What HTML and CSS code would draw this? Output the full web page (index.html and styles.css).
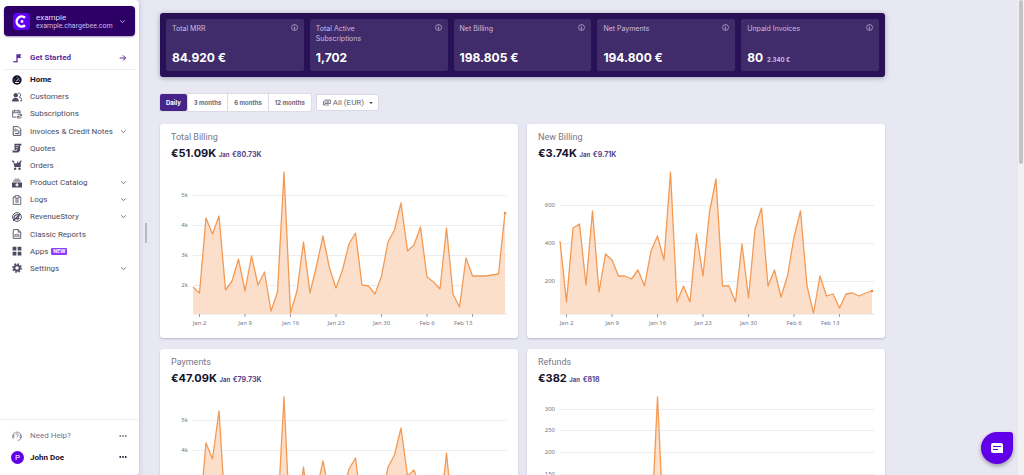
FILE: index.html
```html
<!DOCTYPE html>
<html lang="en">
<head>
<meta charset="utf-8">
<title>Home</title>
<link rel="stylesheet" href="styles.css">
</head>
<body>
<div class="app">
  <aside class="sidebar">
    <button class="account" type="button">
      <svg class="logo" viewBox="0 0 34 34"><rect width="34" height="34" rx="8" fill="#6200f5"/><path d="M24 9.500A10 10 0 1 0 24 24.500" fill="none" stroke="#fff" stroke-width="5"/><circle cx="18" cy="17" r="2.800" fill="#fff"/></svg>
      <span class="account-text"><span class="account-name">example</span><span class="account-domain">example.chargebee.com</span></span>
      <svg class="chevron" viewBox="0 0 12 12"><path d="M2 4l4 4 4-4"/></svg>
    </button>
    <a class="item get-started" href="#">
      <svg class="icon" viewBox="0 0 16 16"><path d="M7 2h8l-2 3 2 3H9v6H7z" fill="currentColor"/><path d="M2 13h7v2H2z" fill="currentColor"/></svg>
      <span class="label">Get Started</span>
      <svg class="arrow" viewBox="0 0 12 12"><path d="M1 6h9M6 2l4 4-4 4"/></svg>
    </a>
    <nav class="nav">
      <a class="item active" href="#"><svg class="icon" viewBox="0 0 16 16"><circle cx="8" cy="8" r="7.500" fill="currentColor"/><path d="M7 10l4.500-5M3 8h1M8 3v1M12 9h1M5 12h6" stroke="#fff" stroke-width="1.500" fill="none"/></svg><span class="label">Home</span></a>
      <a class="item" href="#"><svg class="icon" viewBox="0 0 16 16"><circle cx="6" cy="5" r="3.500" fill="currentColor"/><path d="M0 15c0-8 11-8 11 0z" fill="currentColor"/><path d="M10 2c5-1 5 6 1 6M12 9c3 0 4 2 4 5h-3" fill="none" stroke="currentColor" stroke-width="1.500"/></svg><span class="label">Customers</span></a>
      <a class="item" href="#"><svg class="icon" viewBox="0 0 16 16"><path d="M7 13H1V3h12v4M1 6h12M4 1v3M10 1v3M9 10a3.200 3.200 0 0 1 6 1M15 13a3.200 3.200 0 0 1-6-1M15 8v3h-3M9 15v-3h3" fill="none" stroke="currentColor" stroke-width="1.300"/></svg><span class="label">Subscriptions</span></a>
      <a class="item" href="#"><svg class="icon" viewBox="0 0 16 16"><path d="M2 1h8l4 4v10H2zM5 4v5M5 12h6M8 5v4M11 7v5" fill="none" stroke="currentColor" stroke-width="1.500"/></svg><span class="label">Invoices &amp; Credit Notes</span><svg class="chevron" viewBox="0 0 12 12"><path d="M2 4l4 4 4-4"/></svg></a>
      <a class="item" href="#"><svg class="icon" viewBox="0 0 16 16"><path d="M4 1h11v3h-2v8l-3 3H1v-4h3z" fill="currentColor"/><path d="M6 4h5M6 7h4M6 10h3M2 12h6" stroke="#fff" fill="none"/></svg><span class="label">Quotes</span></a>
      <a class="item" href="#"><svg class="icon" viewBox="0 0 16 16"><path d="M0 1h3l1 4 3 1 2-4 2 3 2-4h3l-2 3v7H4L2 3H0z" fill="currentColor"/><circle cx="5" cy="14" r="2" fill="currentColor"/><circle cx="12" cy="14" r="2" fill="currentColor"/></svg><span class="label">Orders</span></a>
      <a class="item" href="#"><svg class="icon" viewBox="0 0 16 16"><path d="M4 1h8v1.500H4zM2 4h12v1.500H2zM0 7h16v8H0z" fill="currentColor"/><path d="M8 8.500v5M5.500 11h5" stroke="#fff" stroke-width="2"/></svg><span class="label">Product Catalog</span><svg class="chevron" viewBox="0 0 12 12"><path d="M2 4l4 4 4-4"/></svg></a>
      <a class="item" href="#"><svg class="icon" viewBox="0 0 16 16"><path d="M5 3H2v12h12V3h-3M5 1h6v4H5zM5 8h2M9 8h2M5 11h2M9 11h2M8 5v8" fill="none" stroke="currentColor" stroke-width="1.300"/></svg><span class="label">Logs</span><svg class="chevron" viewBox="0 0 12 12"><path d="M2 4l4 4 4-4"/></svg></a>
      <a class="item" href="#"><svg class="icon" viewBox="0 0 16 16"><circle cx="8" cy="8" r="7" fill="none" stroke="currentColor" stroke-width="1.500"/><path d="M3 11c0-6 3-7 9-7-1 5-2 7-6 7M2 14L11 5M8 12l4-2" fill="none" stroke="currentColor" stroke-width="1.700"/></svg><span class="label">RevenueStory</span><svg class="chevron" viewBox="0 0 12 12"><path d="M2 4l4 4 4-4"/></svg></a>
      <a class="item" href="#"><svg class="icon" viewBox="0 0 16 16"><path d="M2 1h8l4 4v10H2zM10 1v4h4M5 8v5M8 7v6M11 8v5" fill="none" stroke="currentColor" stroke-width="1.400"/></svg><span class="label">Classic Reports</span></a>
      <a class="item" href="#"><svg class="icon" viewBox="0 0 16 16"><path d="M1 1h6v6H1zM9 1h6v6H9zM1 9h6v6H1zM9 9h6v6H9z" fill="currentColor"/></svg><span class="label">Apps <span class="badge">NEW</span></span></a>
      <a class="item" href="#"><svg class="icon" viewBox="0 0 16 16"><circle cx="8" cy="8" r="4.300" fill="none" stroke="currentColor" stroke-width="3"/><circle cx="8" cy="8" r="6.500" fill="none" stroke="currentColor" stroke-width="2.600" stroke-dasharray="2.700 2.400"/></svg><span class="label">Settings</span><svg class="chevron" viewBox="0 0 12 12"><path d="M2 4l4 4 4-4"/></svg></a>
    </nav>
    <div class="sidebar-foot">
      <a class="item help" href="#"><svg class="icon" viewBox="0 0 16 16"><path d="M3 11H1V7h2zM13 7h2v4h-2zM2 7C2 0 14 0 14 7M14 11c0 3-2 4-5 4M6 6c0-2 4-2 4 0s-2 1-2 4" fill="none" stroke="currentColor" stroke-width="1.300"/></svg><span class="label">Need Help?</span><svg class="dots" viewBox="0 0 16 4"><circle cx="2.500" cy="2" r="1.800"/><circle cx="8" cy="2" r="1.800"/><circle cx="13.500" cy="2" r="1.800"/></svg></a>
      <a class="item user" href="#"><span class="avatar">P</span><span class="label">John Doe</span><svg class="dots" viewBox="0 0 16 4"><circle cx="2.500" cy="2" r="1.800"/><circle cx="8" cy="2" r="1.800"/><circle cx="13.500" cy="2" r="1.800"/></svg></a>
    </div>
  </aside>
  <div class="resizer"></div>
  <main class="main">
    <section class="kpis">
      <div class="kpi"><div class="kpi-top"><span>Total MRR</span><svg class="info" viewBox="0 0 14 14"><circle cx="7" cy="7" r="6"/><path d="M5.500 6H7v4M5 10h4M7 3v1.500"/></svg></div><div class="kpi-value">84.920 €</div></div>
      <div class="kpi"><div class="kpi-top"><span>Total Active Subscriptions</span><svg class="info" viewBox="0 0 14 14"><circle cx="7" cy="7" r="6"/><path d="M5.500 6H7v4M5 10h4M7 3v1.500"/></svg></div><div class="kpi-value">1,702</div></div>
      <div class="kpi"><div class="kpi-top"><span>Net Billing</span><svg class="info" viewBox="0 0 14 14"><circle cx="7" cy="7" r="6"/><path d="M5.500 6H7v4M5 10h4M7 3v1.500"/></svg></div><div class="kpi-value">198.805 €</div></div>
      <div class="kpi"><div class="kpi-top"><span>Net Payments</span><svg class="info" viewBox="0 0 14 14"><circle cx="7" cy="7" r="6"/><path d="M5.500 6H7v4M5 10h4M7 3v1.500"/></svg></div><div class="kpi-value">194.800 €</div></div>
      <div class="kpi"><div class="kpi-top"><span>Unpaid Invoices</span><svg class="info" viewBox="0 0 14 14"><circle cx="7" cy="7" r="6"/><path d="M5.500 6H7v4M5 10h4M7 3v1.500"/></svg></div><div class="kpi-value">80 <small>2.340 €</small></div></div>
    </section>
    <div class="filters">
      <div class="segments">
        <button class="segment selected" type="button">Daily</button>
        <button class="segment" type="button">3 months</button>
        <button class="segment" type="button">6 months</button>
        <button class="segment" type="button">12 months</button>
      </div>
      <div class="currency">
        <svg class="money" viewBox="0 0 16 12"><path d="M4 1h11v7H4zM1 3v8h11M1 11l3-3" fill="none" stroke="currentColor" stroke-width="1.300"/><circle cx="9.500" cy="4.500" r="1.900" fill="none" stroke="currentColor" stroke-width="1.300"/></svg>
        <select aria-label="Currency"><option>All (EUR)</option></select>
        <svg class="caret" viewBox="0 0 8 4"><path d="M0 0h8L4 4z" fill="currentColor"/></svg>
      </div>
    </div>
    <section class="charts">
      <article class="card"><h2>Total Billing</h2><p class="amount">€51.09K <small>Jan</small> <b>€80.73K</b></p><svg class="chart" data-chart="billing" viewBox="0 40 358 174"></svg></article>
      <article class="card"><h2>New Billing</h2><p class="amount">€3.74K <small>Jan</small> <b>€9.71K</b></p><svg class="chart" data-chart="newBilling" viewBox="0 40 358 174"></svg></article>
      <article class="card"><h2>Payments</h2><p class="amount">€47.09K <small>Jan</small> <b>€79.73K</b></p><svg class="chart" data-chart="payments" viewBox="0 40 358 174"></svg></article>
      <article class="card"><h2>Refunds</h2><p class="amount">€382 <small>Jan</small> <b>€818</b></p><svg class="chart" data-chart="refunds" viewBox="0 40 358 174"></svg></article>
    </section>
  </main>
  <div class="rail"><div class="rail-thumb"></div></div>
  <button class="chat" type="button" aria-label="Chat"><svg viewBox="0 0 14 12"><path d="M3 1h8a2 2 0 0 1 2 2v8H3a2 2 0 0 1-2-2V3a2 2 0 0 1 2-2z" fill="#fff"/><path d="M3 4.500h8M3 7.500h5" stroke="#6000e8" stroke-width="1.200"/></svg></button>
</div>
<script src="charts.js"></script>
</body>
</html>
```
FILE: styles.css
```css
* { box-sizing: border-box; }
body { margin: 0; font-family: Roboto, "Liberation Sans", sans-serif; font-size: 8px; color: #4b4a60; background: #e8e8f3; }
button, select { font: inherit; color: inherit; }
a { color: inherit; text-decoration: none; }
.app { display: flex; height: 100vh; overflow: hidden; position: relative; }

.sidebar { width: 139px; flex: none; display: flex; flex-direction: column; background: #fff; border-radius: 0 4px 4px 0; box-shadow: 0 0 5px rgba(60, 50, 110, .25); padding: 6px 4px 0; }
.account { display: flex; align-items: center; gap: 6px; height: 30px; border: 0; border-radius: 4px; background: #2c0066; color: #e6dcf7; padding: 0 12px 0 9px; text-align: left; box-shadow: 0 1px 2px rgba(40, 0, 90, .4); }
.logo { width: 17px; height: 17px; flex: none; }
.account-text { flex: 1; display: flex; flex-direction: column; }
.account-name { font-size: 8px; line-height: 9px; }
.account-domain { font-size: 7px; line-height: 8px; color: #cdbde8; }
.item { display: flex; align-items: center; padding: 0 8px; }
.icon { width: 10px; height: 10px; flex: none; margin-right: 8px; }
.label { flex: 1; white-space: nowrap; }
.chevron, .arrow { width: 7px; height: 7px; flex: none; fill: none; stroke: currentColor; stroke-width: 1.3; }
.arrow { width: 8px; height: 8px; stroke-width: 1.5; }
.get-started { height: 34px; padding-top: 10px; color: #5a2ca0; font-weight: bold; border-bottom: 1px solid #ececf2; }
.nav { display: grid; grid-auto-rows: 1fr; min-height: 207px; padding-top: 1px; }
.active { color: #14122b; font-weight: bold; }
.badge { display: inline-block; background: #8b3dff; color: #fff; font: bold 5px/7px Inter, sans-serif; padding: 0 2px; border-radius: 1px; vertical-align: 1px; margin-left: 1px; }
.sidebar-foot { margin: auto -4px 0; padding: 5px 4px 7px; border-top: 1px solid #ececf2; }
.help { height: 21px; color: #77768a; }
.user { height: 22px; color: #14122b; font-weight: bold; }
.sidebar-foot .user { padding-left: 7px; }
.avatar { width: 13px; height: 13px; border-radius: 50%; background: #6000e8; color: #fff; font-weight: normal; line-height: 13px; text-align: center; margin-right: 6px; }
.dots { width: 8px; height: 2px; fill: currentColor; }
.resizer { width: 2px; height: 20px; margin: 223px 0 0 6px; background: #b9b9c2; flex: none; }

.main { flex: 1; min-width: 0; overflow-y: auto; scrollbar-width: none; padding: 13px 13px 10px; }
.kpis { display: grid; grid-template-columns: repeat(5, 1fr); gap: 6px; max-width: 725px; padding: 6px; border-radius: 3px; background: #291158; box-shadow: 0 1px 5px rgba(30, 20, 70, .35); }
.kpi { display: flex; flex-direction: column; min-height: 52px; padding: 5px 6px 6px; border-radius: 2px; background: #402c6a; color: #c9bde0; font: 7px/10px Inter, sans-serif; }
.kpi-top { display: flex; justify-content: space-between; align-items: flex-start; }
.kpi-top span { max-width: 70px; }
.info { width: 7px; height: 7px; flex: none; fill: none; stroke: currentColor; stroke-width: 1.3; }
.kpi-value { margin-top: auto; font-size: 12px; line-height: 14px; font-weight: 700; color: #fff; }
.kpi-value small { margin-left: 1px; font-size: 6px; line-height: 1; color: #c9bde0; }
.filters { display: flex; gap: 5px; margin: 17px 0 13px; height: 17px; }
.segments { display: flex; border-radius: 2px; background: #fff; box-shadow: 0 0 0 1px #dcdbe6; }
.segment { border: 0; border-left: 1px solid #d9d8e4; background: none; padding: 0 6px; font: 700 6px/17px Inter, sans-serif; color: #6b6980; }
.selected { border: 0; background: #46248a; color: #fff; border-radius: 2px; }
.currency { position: relative; display: flex; }
.currency select { appearance: none; border: 1px solid #d9d8e4; border-radius: 2px; background: #fff; color: #66657a; width: 63px; padding: 0 0 0 16px; }
.money { position: absolute; left: 7px; top: 5px; width: 8px; height: 7px; }
.caret { position: absolute; right: 6px; top: 8px; width: 4px; height: 2px; }

.charts { display: grid; grid-template-columns: 1fr 1fr; gap: 11px 9px; max-width: 725px; }
.card { background: #fff; border-radius: 3px; box-shadow: 0 1px 2px rgba(50, 40, 100, .25); padding-top: 7px; }
.card h2 { margin: 0 11px; font-size: 9px; line-height: 12px; font-weight: normal; color: #77768a; }
.amount { margin: 3px 11px 4px; font: 700 11px/14px Inter, sans-serif; color: #14122b; }
.amount small, .amount b { line-height: 1; font-weight: 700; color: #55468a; }
.amount small { font-size: 6px; }
.amount b { font-size: 7px; }
.chart { display: block; width: 100%; }
.grid { stroke: #ededf0; }
.axis { stroke: #e3e3e8; }
.tick { stroke: #9b9aa8; }
.area { fill: #fbdfca; }
.line { fill: none; stroke: #f39a55; stroke-width: 1.3; stroke-linejoin: round; }
.end { fill: #f08a3c; }
.chart text { font-family: "Noto Sans", sans-serif; font-size: 6px; fill: #77768a; }

.rail { width: 6px; flex: none; background: #f1f1f3; padding: 0 1px; }
.rail-thumb { height: 164px; background: #c3c3c6; border-radius: 2px; }
.chat { position: absolute; right: 11px; bottom: 11px; width: 32px; height: 32px; border: 0; padding: 0; border-radius: 50% 3px 50% 50%; background: #6000e8; box-shadow: 0 2px 4px rgba(0, 0, 0, .35); display: flex; align-items: center; justify-content: center; }
.chat svg { width: 14px; height: 12px; }
```
FILE: charts.js
```js
const LEFT = 33, STEP = 6.5, BASE = 190, RIGHT = 347;
const billing = [163,169,94,110,92,166,157,135,167,132,161,148,187,168,48,189,167,118,169,142,112,144,164,146,120,109,161,162,170,152,118,106,79,127,121,103,153,158,165,104,170,183,134,152,152,152,151,150,89];
const payments = billing.slice();
payments[4] = 62;
payments[35] = 140;
payments[48] = 149;
const refunds = billing.map((_, i) => i === 15 ? 48 : 186);
const charts = {
  billing: { points: billing, grid: { '5k': 71, '4k': 101, '3k': 131, '2k': 161 } },
  newBilling: {
    points: [117,178,104,100,161,87,168,130,136,152,152,155,146,162,127,112,136,48,178,162,178,110,152,88,55,162,162,178,120,174,105,84,162,146,173,152,113,87,162,189,152,172,170,184,170,169,172,169,167],
    grid: { '600': 81, '400': 119, '200': 157 }
  },
  payments: { points: payments, grid: { '5k': 71, '4k': 101, '3k': 131, '2k': 161 } },
  refunds: { points: refunds, grid: { '300': 60, '250': 81, '200': 103, '150': 125, '100': 147, '50': 168 } }
};
const dates = ['Jan 2', 'Jan 9', 'Jan 16', 'Jan 23', 'Jan 30', 'Feb 6', 'Feb 13'];

document.querySelectorAll('.chart').forEach(svg => {
  const { points, grid } = charts[svg.dataset.chart];
  const line = points.map((y, i) => `${LEFT + i * STEP},${y}`).join(' ');
  const end = LEFT + (points.length - 1) * STEP;
  let out = '';
  for (const [name, y] of Object.entries(grid)) {
    out += `<path class="grid" d="M${LEFT} ${y + 0.5}H${RIGHT}"/><text x="28" y="${y + 2}" text-anchor="end">${name}</text>`;
  }
  out += `<path class="axis" d="M${LEFT} ${BASE}H${RIGHT}"/>`;
  out += `<polygon class="area" points="${LEFT},${BASE} ${line} ${end},${BASE}"/>`;
  out += `<polyline class="line" points="${line}"/>`;
  out += `<circle class="end" cx="${end}" cy="${points[points.length - 1]}" r="1.3"/>`;
  dates.forEach((d, k) => {
    const x = LEFT + STEP + k * STEP * 7;
    out += `<path class="tick" d="M${x} ${BASE}v3"/>`;
    out += d === 'Feb 13'
      ? `<text x="${x}" y="201" text-anchor="end">${d}</text>`
      : `<text x="${x}" y="201" text-anchor="middle">${d}</text>`;
  });
  svg.innerHTML = out;
});
```
